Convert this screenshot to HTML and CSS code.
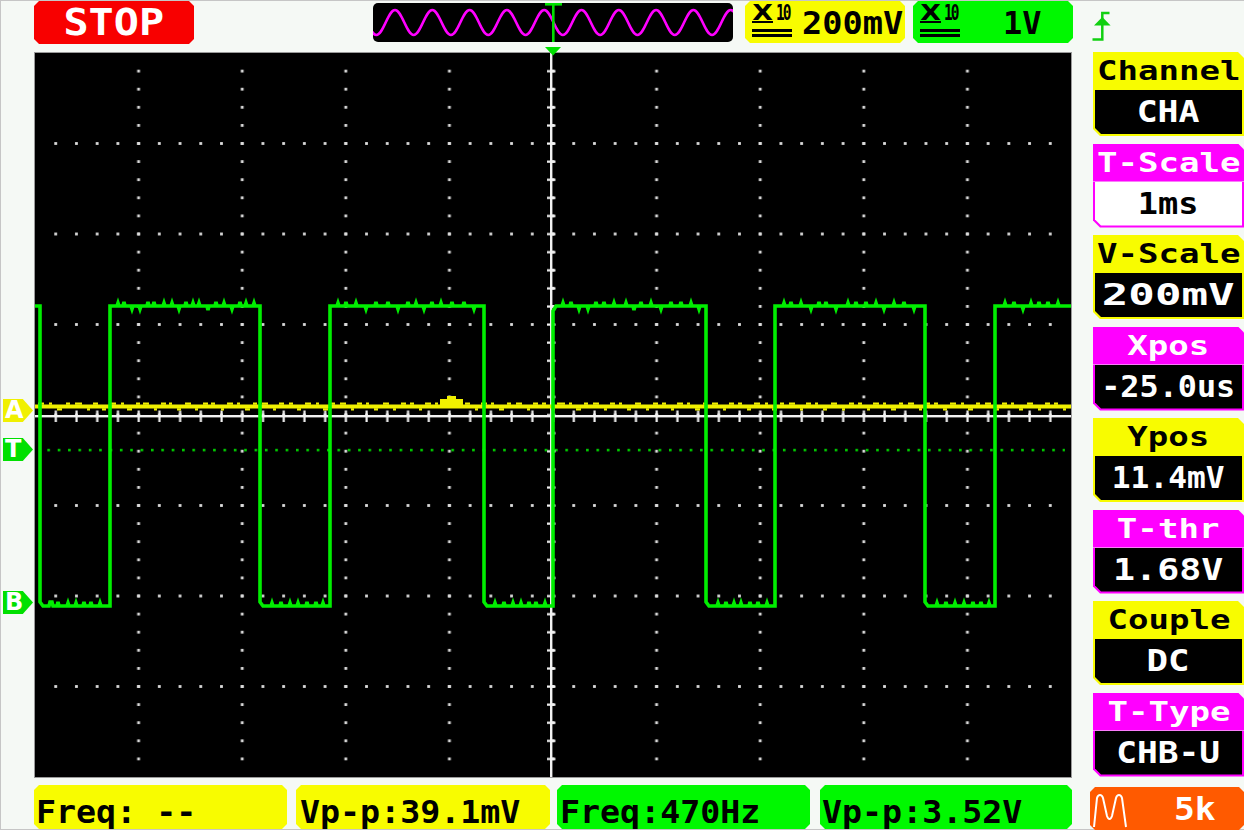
FILE: index.html
```html
<!DOCTYPE html>
<html>
<head>
<meta charset="utf-8">
<title>Oscilloscope</title>
<link rel="stylesheet" href="styles.css">
</head>
<body>
<div class="screen">
  <div class="topbar">
    <div class="stop cham"><span class="tx">STOP</span></div>
    <div class="overview">
      <svg width="360" height="39" viewBox="0 0 360 39">
        <path d="M-15.3 7 c7 0 11.65 25 18.65 25 s11.65 -25 18.65 -25 s11.65 25 18.65 25 s11.65 -25 18.65 -25 s11.65 25 18.65 25 s11.65 -25 18.65 -25 s11.65 25 18.65 25 s11.65 -25 18.65 -25 s11.65 25 18.65 25 s11.65 -25 18.65 -25 s11.65 25 18.65 25 s11.65 -25 18.65 -25 s11.65 25 18.65 25 s11.65 -25 18.65 -25 s11.65 25 18.65 25 s11.65 -25 18.65 -25 s11.65 25 18.65 25 s11.65 -25 18.65 -25 s11.65 25 18.65 25 s11.65 -25 18.65 -25 s11.65 25 18.65 25" fill="none" stroke="#ff00ff" stroke-width="2.6"/>
        <rect x="179" y="0" width="2.6" height="39" fill="#00e000"/>
        <rect x="172" y="0" width="17" height="2.6" fill="#00e000"/>
      </svg>
    </div>
    <div class="probe probe-a cham">
      <span class="x10"><span class="x10-top"><span class="x10-x"><span>X</span></span><span class="x10-n"><span>10</span></span></span><span class="x10-bars"></span></span>
      <span class="pv pv-a">200mV</span>
    </div>
    <div class="probe probe-b cham">
      <span class="x10"><span class="x10-top"><span class="x10-x"><span>X</span></span><span class="x10-n"><span>10</span></span></span><span class="x10-bars"></span></span>
      <span class="pv pv-b">1V</span>
    </div>
    <svg class="trig-edge" width="22" height="34" viewBox="0 0 22 34">
      <path d="M1.5 29.5 H11.3 V3 H18.5" fill="none" stroke="#10d010" stroke-width="2.5"/>
      <polygon points="11.3,7 3,15.5 19.6,15.5" fill="#10d010"/>
    </svg>
  </div>

  <div class="middle">
    <div class="markers">
      <div class="mk mk-a">A</div>
      <div class="mk mk-t">T</div>
      <div class="mk mk-b">B</div>
    </div>

    <div class="scope">
      <svg width="1036" height="724" viewBox="0 0 1036 724">
        <defs>
          <pattern id="rowdots" patternUnits="userSpaceOnUse" x="-10.36" y="-45.25" width="20.72" height="90.5">
            <rect x="8.96" y="43.85" width="2.8" height="2.8" fill="#dcdcdc"/>
          </pattern>
          <pattern id="coldots" patternUnits="userSpaceOnUse" x="-51.8" y="-9.05" width="103.6" height="18.1">
            <rect x="50.4" y="7.65" width="2.8" height="2.8" fill="#dcdcdc"/>
          </pattern>
          <pattern id="hticks" patternUnits="userSpaceOnUse" x="-10.36" y="0" width="20.72" height="724">
            <rect x="9.36" y="0" width="2.2" height="724" fill="#f2f2f2"/>
          </pattern>
          <pattern id="vticks" patternUnits="userSpaceOnUse" x="0" y="-9.05" width="1036" height="18.1">
            <rect x="0" y="8.05" width="1036" height="2.2" fill="#f2f2f2"/>
          </pattern>
          <pattern id="trigdots" patternUnits="userSpaceOnUse" x="2" y="0" width="10.36" height="724">
            <rect x="0" y="395.8" width="2.6" height="2.6" fill="#00c800"/>
          </pattern>
        </defs>
        <rect x="6" y="10" width="1024" height="704" fill="url(#rowdots)"/>
        <rect x="10" y="6" width="1016" height="712" fill="url(#coldots)"/>
        <rect x="6" y="393" width="1024" height="8" fill="url(#trigdots)"/>
        <rect x="0" y="362" width="1036" height="2.4" fill="#f2f2f2"/>
        <rect x="2" y="357.5" width="1032" height="11.5" fill="url(#hticks)"/>
        <rect x="515" y="0" width="2.4" height="724" fill="#f2f2f2"/>
        <rect x="512" y="2" width="8.5" height="720" fill="url(#vticks)"/>
        <g class="ytrace">
          <path d="M0 353.5 H1036" fill="none" stroke="#f0f000" stroke-width="4"/>
          <path d="M3 350.6h6M14 350.6h3M22 356.4h5M31 350.6h4M40 350.6h7M52 356.4h3M58 350.6h5M67 356.4h4M75 350.6h6M86 350.6h3M92 356.4h5M101 350.6h4M108 350.6h6M119 356.4h3M126 350.6h5M134 350.6h3M142 356.4h4M150 350.6h6M160 356.4h3M168 350.6h5M176 350.6h4M186 356.4h3M192 350.6h6M202 350.6h3M210 356.4h5M218 350.6h4M227 350.6h6M238 356.4h3M244 350.6h5M254 350.6h4M262 356.4h4M270 350.6h6M281 350.6h3M288 356.4h5M296 350.6h4M305 350.6h6M316 356.4h3M322 350.6h5M331 350.6h3M339 356.4h4M348 350.6h6M358 356.4h3M366 350.6h5M375 350.6h4M384 356.4h3M390 350.6h6M400 350.6h3M430 350.6h5M440 356.4h3M446 350.6h6M456 350.6h3M464 356.4h5M472 350.6h4M481 350.6h6M492 356.4h3M498 350.6h5M507 350.6h4M516 356.4h4M522 350.6h8M534 350.6h3M541 356.4h5M549 350.6h4M558 350.6h6M569 356.4h3M575 350.6h5M584 350.6h3M592 356.4h4M600 350.6h6M611 356.4h3M618 350.6h5M627 350.6h4M636 356.4h3M642 350.6h6M652 350.6h3M660 356.4h5M668 350.6h4M677 350.6h6M688 356.4h3M694 350.6h5M703 350.6h4M712 356.4h4M719 350.6h6M730 350.6h3M737 356.4h5M745 350.6h4M754 350.6h6M765 356.4h3M771 350.6h5M780 350.6h3M788 356.4h4M796 350.6h6M807 356.4h3M814 350.6h5M823 350.6h4M832 356.4h3M838 350.6h6M848 350.6h3M856 356.4h5M864 350.6h4M873 350.6h6M884 356.4h3M890 350.6h5M899 350.6h4M908 356.4h4M915 350.6h6M926 350.6h3M933 356.4h5M941 350.6h4M950 350.6h6M961 356.4h3M967 350.6h5M976 350.6h3M984 356.4h4M992 350.6h6M1003 356.4h3M1010 350.6h5M1019 350.6h4M1028 356.4h3" fill="none" stroke="#f0f000" stroke-width="2.2"/>
          <path d="M405 352 V346 H412 V343 H421 V346 H428 V352 Z" fill="#f0f000"/>
        </g>
        <path class="gtrace" d="M0 253 H5 V549 l3 4 H14 l1 -4 l2 0 l1 4 H22 l1 -4 l1 4 H32 l1 -3 l1 3 H40 l1 -3 l1 3 H48 l1 -4 l1 4 H55 l1 -4 l1 4 H64 l1 -3 l1 3 H75 V253 H82 l1 -3 l1 3 H88 l1 -4 l1 4 H96 l1 3 l1 -3 H104 l1 3 l1 -3 H112 l1 -4 l1 4 H118 l1 -4 l1 4 H128 l1 -3 l1 3 H136 l1 -3 l1 3 H143 l1 3 l1 -3 H150 l1 -4 l1 4 H157 l1 -3 l1 3 H163 l1 -3 l1 3 H172 l1 4 l1 -4 H180 l1 -4 l1 4 H188 l1 -3 l1 3 H196 l1 3 l1 -3 H204 l1 -4 l1 4 H210 l1 -3 l1 3 H218 l1 -3 l1 3 H225 V549 l3 4 H236 l1 -3 l1 3 H245 l1 -4 l1 4 H254 l1 -3 l1 3 H262 l1 -3 l1 3 H271 l1 -4 l1 4 H280 l1 -4 l1 4 H287 l1 -3 l1 3 H295 V253 H302 l1 -3 l1 3 H310 l1 -4 l1 4 H320 l1 -3 l1 3 H330 l1 3 l1 -3 H340 l1 -4 l1 4 H352 l1 -4 l1 4 H362 l1 3 l1 -3 H372 l1 -4 l1 4 H380 l1 -3 l1 3 H388 l1 3 l1 -3 H396 l1 -4 l1 4 H405 l1 -3 l1 3 H416 l1 -4 l1 4 H428 l1 -4 l1 4 H438 l1 3 l1 -3 H449 V549 l3 4 H459 l1 -3 l1 3 H468 l1 -4 l1 4 H477 l1 -3 l1 3 H485 l1 -3 l1 3 H493 l1 -4 l1 4 H500 l1 -4 l1 4 H509 l1 -3 l1 3 H518 V258 l3 -5 H527 l1 -3 l1 3 H535 l1 -4 l1 4 H543 l1 3 l1 -3 H552 l1 3 l1 -3 H560 l1 -4 l1 4 H568 l1 -4 l1 4 H578 l1 -3 l1 3 H590 l1 -3 l1 3 H598 l1 4 l1 -4 H605 l1 -4 l1 4 H615 l1 -3 l1 3 H625 l1 3 l1 -3 H635 l1 -4 l1 4 H645 l1 -4 l1 4 H655 l1 -3 l1 3 H663 l1 3 l1 -3 H671 V549 l3 4 H682 l1 -3 l1 3 H690 l1 -4 l1 4 H698 l1 -3 l1 3 H705 l1 -3 l1 3 H714 l1 -4 l1 4 H722 l1 -4 l1 4 H731 l1 -3 l1 3 H740 V253 H748 l1 -3 l1 3 H755 l1 -4 l1 4 H765 l1 -3 l1 3 H775 l1 3 l1 -3 H783 l1 -4 l1 4 H790 l1 -4 l1 4 H800 l1 3 l1 -3 H812 l1 -3 l1 3 H820 l1 -4 l1 4 H830 l1 -4 l1 4 H840 l1 -3 l1 3 H848 l1 3 l1 -3 H858 l1 -3 l1 3 H868 l1 -4 l1 4 H878 l1 3 l1 -3 H890 V549 l3 4 H901 l1 -3 l1 3 H910 l1 -4 l1 4 H919 l1 -3 l1 3 H928 l1 -3 l1 3 H937 l1 -4 l1 4 H945 l1 -4 l1 4 H953 l1 -3 l1 3 H960 V253 H969 l1 -3 l1 3 H978 l1 -4 l1 4 H987 l1 3 l1 -3 H995 l1 -3 l1 3 H1003 l1 -4 l1 4 H1012 l1 -4 l1 4 H1022 l1 -3 l1 3 H1036" fill="none" stroke="#00ee00" stroke-width="3.6"/>
      </svg>
    </div>

    <div class="panel">
      <div class="item yel">
        <div class="hd"><span class="tx">Channel</span></div>
        <div class="vl"><div class="in"><span class="tx s116">CHA</span></div></div>
      </div>
      <div class="item mag">
        <div class="hd"><span class="tx">T-Scale</span></div>
        <div class="vl sel"><div class="in"><span class="tx s112">1ms</span></div></div>
      </div>
      <div class="item yel">
        <div class="hd"><span class="tx">V-Scale</span></div>
        <div class="vl"><div class="in"><span class="tx s147">200mV</span></div></div>
      </div>
      <div class="item mag">
        <div class="hd"><span class="tx">Xpos</span></div>
        <div class="vl"><div class="in"><span class="tx s106">-25.0us</span></div></div>
      </div>
      <div class="item yel">
        <div class="hd"><span class="tx">Ypos</span></div>
        <div class="vl"><div class="in"><span class="tx s104">11.4mV</span></div></div>
      </div>
      <div class="item mag">
        <div class="hd"><span class="tx">T-thr</span></div>
        <div class="vl"><div class="in"><span class="tx s122">1.68V</span></div></div>
      </div>
      <div class="item yel">
        <div class="hd"><span class="tx">Couple</span></div>
        <div class="vl"><div class="in"><span class="tx s119">DC</span></div></div>
      </div>
      <div class="item mag">
        <div class="hd"><span class="tx">T-Type</span></div>
        <div class="vl"><div class="in"><span class="tx s115">CHB-U</span></div></div>
      </div>
    </div>
  </div>

  <div class="bottombar">
    <div class="meas m1 yb cham"><span class="tx">Freq: --</span></div>
    <div class="meas m2 yb cham"><span class="tx">Vp-p:39.1mV</span></div>
    <div class="meas m3 gb cham"><span class="tx">Freq:470Hz</span></div>
    <div class="meas m4 gb cham"><span class="tx">Vp-p:3.52V</span></div>
    <div class="gen cham">
      <svg class="gen-icon" width="42" height="34" viewBox="0 0 42 34">
        <path d="M2 33 L5 4 Q6 1 8 1 Q10 1 11 4 L15 22 Q16 25 17.5 25 Q19 25 20 22 L24 4 Q25 1 27 1 Q29 1 30 4 L34 33" fill="none" stroke="#ffffff" stroke-width="2"/>
      </svg>
      <span class="tx">5k</span>
    </div>
  </div>

  <svg class="trig-pos" width="16" height="9" viewBox="0 0 16 9">
    <polygon points="0,0 16,0 8,8.5" fill="#00e000"/>
  </svg>
</div>
</body>
</html>
```
FILE: styles.css
```css
* { box-sizing: border-box; margin: 0; padding: 0; }

html, body {
  width: 1244px;
  height: 830px;
  overflow: hidden;
  background: #f5f9f5;
}

body {
  font-family: "DejaVu Sans Mono", monospace;
  font-weight: bold;
}

.screen {
  position: relative;
  width: 1244px;
  height: 830px;
  box-shadow: inset 1px 1px 0 #c6c6c6, inset 0 -1px 0 #c6c6c6;
}

.cham {
  --k: 5px;
  clip-path: polygon(var(--k) 0, calc(100% - var(--k)) 0, 100% var(--k), 100% calc(100% - var(--k)), calc(100% - var(--k)) 100%, var(--k) 100%, 0 calc(100% - var(--k)), 0 var(--k));
}

.tx {
  display: inline-block;
  line-height: 1;
  white-space: pre;
}

/* ---------- top bar ---------- */
.topbar {
  display: flex;
  align-items: flex-start;
  height: 46px;
}

.stop {
  margin: 1px 0 0 34px;
  width: 160px;
  height: 43px;
  background: #f80000;
  color: #fff;
  display: flex;
  align-items: center;
  justify-content: center;
}
.stop .tx {
  font-size: 38px;
  transform: scaleX(1.1);
  margin-top: -2px;
}

.overview {
  margin: 3px 0 0 179px;
  width: 360px;
  height: 39px;
  background: #000;
  border-radius: 5px;
  overflow: hidden;
}
.overview svg { display: block; }

.probe {
  margin: 1px 0 0 12px;
  width: 160px;
  height: 42px;
  display: flex;
  align-items: flex-start;
  padding-left: 7px;
  color: #000;
}
.probe-a { background: #f8fc00; }
.probe-b { background: #00f800; margin-left: 8px; }

.x10 {
  width: 40px;
  margin-top: 3px;
  display: flex;
  flex-direction: column;
}
.x10-top {
  display: flex;
  height: 19px;
}
.x10-x {
  width: 21px;
  height: 19px;
  border-bottom: 2px solid #000;
  text-align: center;
}
.x10-x span {
  display: inline-block;
  font-family: "DejaVu Sans", sans-serif;
  font-size: 22px;
  line-height: 17px;
  transform: scaleX(1.22);
}
.x10-n {
  margin-left: 3px;
  width: 16px;
  height: 17px;
}
.x10-n span {
  display: inline-block;
  font-size: 22px;
  line-height: 17px;
  letter-spacing: -3px;
  transform: scaleX(0.66);
  transform-origin: left center;
}
.x10-bars {
  margin-top: 6px;
  height: 8px;
  border-top: 3px solid #000;
  border-bottom: 3px solid #000;
}

.pv {
  font-size: 32px;
  line-height: 1;
  margin-top: 6px;
  display: inline-block;
  transform-origin: left center;
}
.pv-a { margin-left: 10px; transform: scaleX(1.05); }
.pv-b { margin-left: 43px; }

.trig-edge {
  margin: 10px 0 0 18px;
  display: block;
}

/* ---------- middle ---------- */
.middle {
  display: flex;
  align-items: flex-start;
  height: 731px;
}

.markers {
  position: relative;
  width: 35px;
  height: 731px;
}
.mk {
  position: absolute;
  left: 3px;
  width: 30px;
  height: 23px;
  color: #fff;
  font-family: "DejaVu Sans", sans-serif;
  font-size: 24px;
  line-height: 23px;
  padding-left: 2px;
  clip-path: polygon(0 0, 66% 0, 100% 50%, 66% 100%, 0 100%);
}
.mk-a { top: 353px; background: #f0f000; }
.mk-t { top: 392px; background: #00e000; }
.mk-b { top: 545px; background: #00e000; }

.scope {
  margin-top: 7px;
  width: 1036px;
  height: 724px;
  background: #000;
  box-shadow: 0 0 0 1px #9a9a9a;
}
.scope svg { display: block; }

/* ---------- right panel ---------- */
.panel {
  margin: 6px 0 0 22px;
  width: 151px;
  display: flex;
  flex-direction: column;
  gap: 7.5px;
}
.item { --c: #f8fc00; }
.item.mag { --c: #ff00ff; }

.hd {
  height: 38px;
  background: var(--c);
  color: #000;
  display: flex;
  align-items: center;
  justify-content: center;
  clip-path: polygon(0 0, calc(100% - 6px) 0, 100% 6px, 100% 100%, 0 100%);
}
.mag .hd { color: #fff; }
.hd .tx {
  font-size: 26px;
  transform: scaleX(1.31);
}

.vl {
  height: 46px;
  background: var(--c);
  padding: 0 2px 2px 2px;
  clip-path: polygon(0 0, 100% 0, 100% 100%, 7px 100%, 0 calc(100% - 7px));
}
.in {
  height: 100%;
  background: #000;
  color: #fff;
  display: flex;
  align-items: center;
  justify-content: center;
  clip-path: polygon(0 0, 100% 0, 100% 100%, 6px 100%, 0 calc(100% - 6px));
}
.vl.sel .in { background: #fff; color: #000; }
.in .tx { font-size: 30px; }
.s104 { transform: scaleX(1.04); }
.s106 { transform: scaleX(1.06); }
.s112 { transform: scaleX(1.12); }
.s115 { transform: scaleX(1.15); }
.s116 { transform: scaleX(1.16); }
.s119 { transform: scaleX(1.19); }
.s122 { transform: scaleX(1.22); }
.s147 { transform: scaleX(1.47); }

/* ---------- bottom bar ---------- */
.bottombar {
  display: flex;
  align-items: flex-start;
  margin-top: 8px;
  height: 45px;
}
.meas {
  height: 44px;
  color: #000;
  padding: 11px 0 0 2px;
}
.meas .tx {
  font-size: 32px;
  transform: scaleX(1.04);
  transform-origin: left center;
}
.yb { background: #f8fc00; }
.gb { background: #00f800; }
.m1 { margin-left: 34px; width: 253px; }
.m2 { margin-left: 9px; width: 254px; padding-left: 4px; }
.m3 { margin-left: 7px; width: 253px; padding-left: 3px; }
.m4 { margin-left: 10px; width: 252px; padding-left: 2px; }

.gen {
  margin: 2px 0 0 18px;
  width: 154px;
  height: 43px;
  background: #ff5a00;
  color: #fff;
  display: flex;
  align-items: center;
  padding-left: 2px;
}
.gen-icon { display: block; margin-top: 4px; }
.gen .tx {
  font-size: 32px;
  margin-left: 40px;
  transform: scaleX(1.08);
  transform-origin: left center;
}

.trig-pos {
  position: absolute;
  left: 545px;
  top: 47px;
  display: block;
}
```
